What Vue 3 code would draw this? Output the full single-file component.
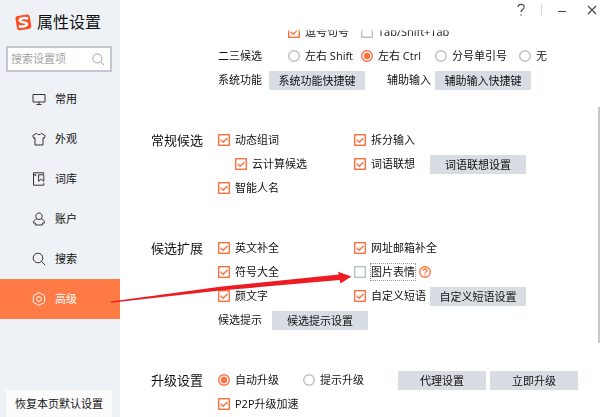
<script setup>
import { ref } from 'vue'

const current = ref('advanced')
const keyword = ref('')
const pick = ref('ctrl')
const upgrade = ref('auto')
const checks = ref({
  comma: true, tab: false,
  phrase: true, cloud: true, name: true, split: true, assoc: true,
  english: true, symbol: true, kaomoji: true, url: true, picture: false, custom: true,
  p2p: true,
})

const nav = [
  { id: 'common', text: '常用' },
  { id: 'skin', text: '外观' },
  { id: 'dict', text: '词库' },
  { id: 'account', text: '账户' },
  { id: 'search', text: '搜索' },
  { id: 'advanced', text: '高级' },
]
</script>

<template>
  <div class="window">
    <aside class="sidebar">
      <h1 class="brand">
        <svg class="logo" viewBox="0 0 17 17" aria-hidden="true">
          <rect x="1.2" y="1.2" width="14.4" height="14.4" rx="2.6" fill="#fb4d20" transform="rotate(-9 8.5 8.5)" />
          <path d="M13.2 4.5C9.8 3.7 4.7 4 4.7 6.4C4.7 8.7 12 7.8 12 10C12 12.2 7.6 12.8 3.8 12.3" fill="none" stroke="#fff" stroke-width="2.5" />
        </svg>
        <span>属性设置</span>
      </h1>

      <label class="search">
        <input v-model="keyword" type="text" placeholder="搜索设置项" aria-label="搜索设置项" />
        <svg class="lens" viewBox="0 0 14 14" aria-hidden="true">
          <circle cx="5.8" cy="5.8" r="4.9" /><path d="M9.3 9.3L13 13" />
        </svg>
      </label>

      <nav class="nav">
        <a v-for="item in nav" :key="item.id" href="#" class="nav-item" :class="{ active: current === item.id }" @click.prevent="current = item.id">
          <svg class="nav-icon" viewBox="0 0 14 14" aria-hidden="true">
            <template v-if="item.id === 'common'">
              <path d="M1 2.5H13V10H1ZM7 10V12.5M4.5 12.5H9.5" />
            </template>
            <template v-else-if="item.id === 'skin'">
              <path d="M4.6 1.3L.7 3.7L1.8 6.3L3 5.8V13H11V5.8L12.2 6.3L13.3 3.7L9.4 1.3C8.5 3.1 5.5 3.1 4.6 1.3Z" />
            </template>
            <template v-else-if="item.id === 'dict'">
              <path d="M11.8 11V13.2H1.5V.8H11.8V2M1.5 2.8H4M11.8 2.8V9.3L9.2 7.2L6.6 9.3V2.8ZM3.8 2.8V4" />
            </template>
            <template v-else-if="item.id === 'account'">
              <path d="M4.8 6.6C2.9 4.5 4 1 7 1S11.1 4.5 9.2 6.6C7.9 7.7 6.1 7.7 4.8 6.6ZM4.8 6.8C2.5 7.5 1.3 9 1.5 11H3.4V13H10.6V11H12.5C12.7 9 11.5 7.5 9.2 6.8" />
            </template>
            <template v-else-if="item.id === 'search'">
              <circle cx="6" cy="6" r="4.8" /><path d="M9.5 9.5L13.2 13.2" />
            </template>
            <template v-else>
              <path d="M5.6 1.3Q7 .2 8.4 1.3L11.6 3.1Q13 3.6 12.7 5.2V8.8Q13 10.4 11.6 10.9L8.4 12.7Q7 13.8 5.6 12.7L2.4 10.9Q1 10.4 1.3 8.8V5.2Q1 3.6 2.4 3.1Z" />
              <circle cx="7" cy="7" r="2.4" />
            </template>
          </svg>
          <span>{{ item.text }}</span>
        </a>
      </nav>

      <button type="button" class="restore">恢复本页默认设置</button>
    </aside>

    <main class="main">
      <header class="titlebar">
        <button type="button" class="tool" aria-label="帮助">
          <svg class="glyph" viewBox="0 0 12 14" aria-hidden="true">
            <path d="M3 4.1C3 .5 9.2.4 9.2 4C9.2 6.5 6 6.5 6 9.3" /><circle cx="6" cy="12" r=".7" fill="#444" stroke="none" />
          </svg>
        </button>
        <span class="divider"></span>
        <button type="button" class="tool" aria-label="最小化">
          <svg class="glyph" viewBox="0 0 12 14" aria-hidden="true"><path d="M2 8.5H10" /></svg>
        </button>
        <button type="button" class="tool close" aria-label="关闭">
          <svg class="glyph" viewBox="0 0 12 14" aria-hidden="true"><path d="M2 3L10 11M10 3L2 11" /></svg>
        </button>
      </header>

      <div class="panel">
        <section class="group">
          <div class="fields keys">
            <div class="row keys-row">
              <span></span>
              <label class="opt"><input v-model="checks.comma" type="checkbox" />逗号句号</label>
              <label class="opt"><input v-model="checks.tab" type="checkbox" />Tab/Shift+Tab</label>
            </div>
            <div class="row keys-row">
              <span>二三候选</span>
              <label class="opt"><input v-model="pick" type="radio" name="pick" value="shift" />左右 Shift</label>
              <label class="opt"><input v-model="pick" type="radio" name="pick" value="ctrl" />左右 Ctrl</label>
              <label class="opt"><input v-model="pick" type="radio" name="pick" value="semi" />分号单引号</label>
              <label class="opt"><input v-model="pick" type="radio" name="pick" value="none" />无</label>
            </div>
            <div class="row pairs">
              <span class="pair">系统功能<button type="button" class="btn">系统功能快捷键</button></span>
              <span class="pair">辅助输入<button type="button" class="btn">辅助输入快捷键</button></span>
            </div>
          </div>
        </section>

        <section class="group">
          <h2>常规候选</h2>
          <div class="fields">
            <div class="row two">
              <label class="opt"><input v-model="checks.phrase" type="checkbox" />动态组词</label>
              <label class="opt"><input v-model="checks.split" type="checkbox" />拆分输入</label>
            </div>
            <div class="row two">
              <label class="opt sub"><input v-model="checks.cloud" type="checkbox" />云计算候选</label>
              <div class="with-button">
                <label class="opt"><input v-model="checks.assoc" type="checkbox" />词语联想</label>
                <button type="button" class="btn">词语联想设置</button>
              </div>
            </div>
            <div class="row two">
              <label class="opt"><input v-model="checks.name" type="checkbox" />智能人名</label>
            </div>
          </div>
        </section>

        <section class="group">
          <h2>候选扩展</h2>
          <div class="fields">
            <div class="row two">
              <label class="opt"><input v-model="checks.english" type="checkbox" />英文补全</label>
              <label class="opt"><input v-model="checks.url" type="checkbox" />网址邮箱补全</label>
            </div>
            <div class="row two">
              <label class="opt"><input v-model="checks.symbol" type="checkbox" />符号大全</label>
              <div class="hinted">
                <label class="opt"><input v-model="checks.picture" type="checkbox" /><span class="focused">图片表情</span></label>
                <svg class="help" viewBox="0 0 12 12" role="img" aria-label="说明">
                  <circle cx="6" cy="6" r="5.3" />
                  <path d="M4.1 4.8C4.1 2.4 7.9 2.4 7.9 4.7C7.9 6.1 6 6 6 7.5M6 8.5V9.6" />
                </svg>
              </div>
            </div>
            <div class="row two">
              <label class="opt"><input v-model="checks.kaomoji" type="checkbox" />颜文字</label>
              <div class="with-button">
                <label class="opt"><input v-model="checks.custom" type="checkbox" />自定义短语</label>
                <button type="button" class="btn">自定义短语设置</button>
              </div>
            </div>
            <div class="row">
              <span class="pair wide">候选提示<button type="button" class="btn">候选提示设置</button></span>
            </div>
          </div>
        </section>

        <section class="group">
          <h2>升级设置</h2>
          <div class="fields">
            <div class="row upgrade">
              <label class="opt"><input v-model="upgrade" type="radio" name="upgrade" value="auto" />自动升级</label>
              <label class="opt"><input v-model="upgrade" type="radio" name="upgrade" value="prompt" />提示升级</label>
              <div class="actions">
                <button type="button" class="btn small">代理设置</button>
                <button type="button" class="btn small">立即升级</button>
              </div>
            </div>
            <div class="row">
              <label class="opt"><input v-model="checks.p2p" type="checkbox" />P2P升级加速</label>
            </div>
          </div>
        </section>
      </div>
      <span class="scrollbar"></span>
    </main>

    <svg class="arrow" viewBox="0 0 242 34" aria-hidden="true">
      <path d="M1 31.4L110 16.7L228.8 4.6L228 1.8L241.4 6.4L230.6 13.4L229.6 10L110 20.6L1 32.8Z" />
    </svg>
  </div>
</template>

<style>
body {
  margin: 0;
  background: #fff;
}
</style>

<style scoped>
.window {
  position: relative;
  display: flex;
  height: 100vh;
  overflow: hidden;
  font-family: "Open Sans", "Noto Sans CJK SC", sans-serif;
  font-size: 11px;
  line-height: 16px;
  color: #111;
}
button,
input {
  margin: 0;
  font: inherit;
  color: inherit;
}
button {
  padding: 0;
  border: 0;
  white-space: nowrap;
}

.sidebar {
  box-sizing: border-box;
  display: flex;
  flex: none;
  flex-direction: column;
  width: 120px;
  padding-top: 10px;
  background: #eef1f6;
}
.brand {
  display: flex;
  align-items: center;
  gap: 5px;
  height: 24px;
  margin: 0 0 12px;
  padding-left: 15px;
  font-size: 16px;
  font-weight: 400;
  line-height: 24px;
}
.logo {
  width: 17px;
  height: 17px;
}
.search {
  box-sizing: border-box;
  display: flex;
  align-items: center;
  height: 26px;
  margin: 0 8px 7px 6px;
  padding: 0 5px 0 3px;
  border: 2px solid #c3c8d0;
  background: #fff;
}
.search input {
  flex: 1;
  min-width: 0;
  padding: 0;
  border: 0;
  outline: 0;
  background: none;
}
.search input::placeholder {
  color: #a5a5a5;
}
.lens {
  width: 13px;
  height: 13px;
  fill: none;
  stroke: #9a9ea4;
}
.nav-item {
  display: flex;
  align-items: center;
  gap: 9px;
  height: 40px;
  padding-left: 32px;
  color: inherit;
  text-decoration: none;
}
.nav-icon {
  width: 14px;
  height: 14px;
  fill: none;
  stroke: #333;
}
.nav-item.active {
  background: #ff7a45;
  color: #fff;
}
.active .nav-icon {
  stroke: #fff;
}
.restore {
  height: 27px;
  margin: auto 8px 0 6px;
  background: #fcfcfd;
}

.main {
  position: relative;
  display: flex;
  flex: 1;
  flex-direction: column;
  min-width: 0;
}
.titlebar {
  display: flex;
  flex: none;
  justify-content: flex-end;
  height: 29px;
}
.tool {
  display: flex;
  justify-content: center;
  width: 28px;
  height: 20px;
  padding-top: 3px;
  background: none;
}
.close {
  width: 16px;
  margin-left: 8px;
}
.divider {
  width: 1px;
  height: 12px;
  margin: 4px 6px 0;
  background: #d5d7da;
}
.glyph {
  width: 12px;
  height: 14px;
  fill: none;
  stroke: #444;
  stroke-width: 1.1;
}
.panel {
  flex: 1;
  min-height: 0;
  padding-left: 31px;
  overflow: hidden;
  mask-image: linear-gradient(transparent, #000 3px);
}
.group {
  display: flex;
  margin-bottom: 36px;
}
.group:first-child {
  margin-top: -9px;
}
h2 {
  width: 67px;
  height: 24px;
  margin: 0;
  font-size: 13px;
  font-weight: 400;
  line-height: 24px;
}
.fields {
  flex: 1;
}
.keys {
  padding-left: 67px;
}
.row {
  display: grid;
  align-items: center;
  height: 24px;
  white-space: nowrap;
}
.keys-row {
  grid-template-columns: 70px 73px 74px 84px 1fr;
}
.pairs {
  grid-template-columns: 169px 1fr;
}
.two {
  grid-template-columns: 136px 1fr;
}
.upgrade {
  grid-template-columns: 85px 95px 1fr;
}
.opt {
  display: flex;
  align-items: center;
  gap: 5px;
}
.sub {
  padding-left: 17px;
}
.pair {
  display: flex;
  align-items: center;
  gap: 7px;
}
.pairs .pair + .pair {
  gap: 4px;
}
.wide {
  gap: 10px;
}
.with-button {
  display: grid;
  grid-template-columns: 76px 1fr;
  align-items: center;
}
.hinted,
.actions {
  display: flex;
  align-items: center;
  gap: 4px;
}
.btn {
  width: 96px;
  height: 19px;
  background: #d8dce3;
  line-height: 19px;
}
.small {
  width: 88px;
}
.focused {
  outline: 1px dotted #999;
}
.help {
  width: 12px;
  height: 12px;
  fill: none;
  stroke: #ff7a45;
  stroke-width: 1.4;
}

.opt input {
  flex: none;
  width: 12px;
  height: 12px;
  appearance: none;
  background: center / 12px 12px no-repeat;
}
.opt input[type="checkbox"] {
  background-image: url("data:image/svg+xml,%3Csvg xmlns='http://www.w3.org/2000/svg' viewBox='0 0 12 12'%3E%3Crect x='.7' y='.7' width='10.6' height='10.6' fill='%23fff' stroke='%23b9bfc9' stroke-width='1.4'/%3E%3C/svg%3E");
}
.opt input[type="checkbox"]:checked {
  background-image: url("data:image/svg+xml,%3Csvg xmlns='http://www.w3.org/2000/svg' viewBox='0 0 12 12'%3E%3Crect x='.7' y='.7' width='10.6' height='10.6' fill='%23fff' stroke='%23ff7040' stroke-width='1.4'/%3E%3Cpath d='M2.7 5.8L5.2 8.2L9.5 3.9' fill='none' stroke='%23ff7040' stroke-width='1.4'/%3E%3C/svg%3E");
}
.opt input[type="radio"] {
  background-image: url("data:image/svg+xml,%3Csvg xmlns='http://www.w3.org/2000/svg' viewBox='0 0 12 12'%3E%3Ccircle cx='6' cy='6' r='5.3' fill='%23fff' stroke='%23b9bfc9' stroke-width='1.4'/%3E%3C/svg%3E");
}
.opt input[type="radio"]:checked {
  background-image: url("data:image/svg+xml,%3Csvg xmlns='http://www.w3.org/2000/svg' viewBox='0 0 12 12'%3E%3Ccircle cx='6' cy='6' r='5.3' fill='%23fff' stroke='%23ff7040' stroke-width='1.4'/%3E%3Ccircle cx='6' cy='6' r='3.2' fill='%23ff7040'/%3E%3C/svg%3E");
}

.scrollbar {
  position: absolute;
  top: 107px;
  right: 0;
  width: 2px;
  height: 236px;
  background: #c6c8cc;
}
.arrow {
  position: absolute;
  top: 270px;
  left: 110px;
  width: 242px;
  height: 34px;
  fill: #ed1c24;
  pointer-events: none;
}
</style>
